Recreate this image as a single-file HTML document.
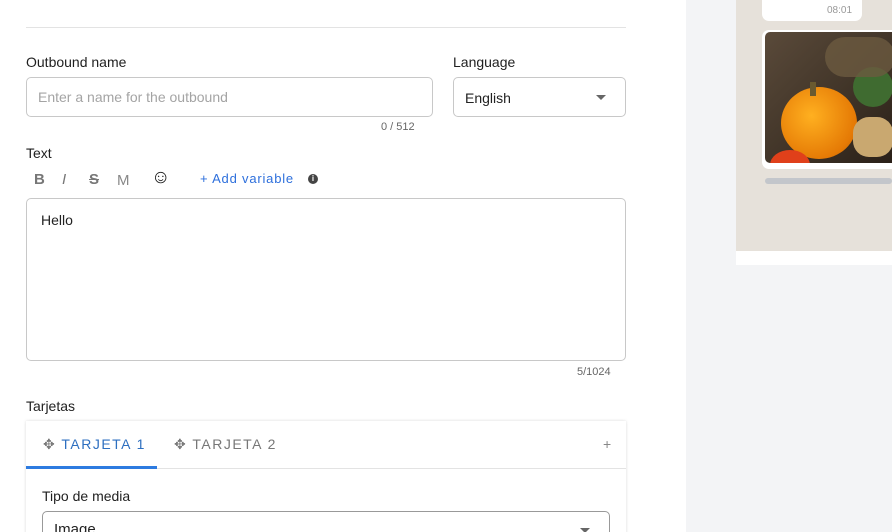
<!DOCTYPE html>
<html style="width:892px;height:532px;overflow:hidden"><head><style>
*{box-sizing:border-box;margin:0;padding:0}
body{width:892px;height:532px;overflow:hidden;background:#fff;font-family:"Liberation Sans",sans-serif;color:#222;position:relative}
#w{position:relative;width:892px;height:532px;overflow:hidden}
.a{position:absolute}
.lbl{font-size:14px;color:#1f1f1f}
.inp{border:1px solid #c8c8c8;border-radius:5px;background:#fff}
.small{font-size:11px;color:#666}
</style></head><body><div id="w">
<div class="a" style="left:26px;top:27px;width:600px;height:1px;background:#e3e3e3"></div>
<div class="a lbl" style="left:26px;top:54px">Outbound name</div>
<div class="a inp" style="left:26px;top:77px;width:407px;height:40px"></div>
<div class="a" style="left:38px;top:89px;font-size:14px;color:#a4a4a4">Enter a name for the outbound</div>
<div class="a small" style="left:381px;top:121px">0 / 512</div>
<div class="a lbl" style="left:453px;top:54px">Language</div>
<div class="a inp" style="left:453px;top:77px;width:173px;height:40px"></div>
<div class="a" style="left:465px;top:90px;font-size:14px">English</div>
<div class="a" style="left:596px;top:95px;width:0;height:0;border-left:5px solid transparent;border-right:5px solid transparent;border-top:5px solid #666"></div>
<div class="a lbl" style="left:26px;top:145px">Text</div>
<div class="a" style="left:34px;top:171px;font-size:15px;color:#777;font-weight:bold">B</div>
<div class="a" style="left:62px;top:171px;font-size:15px;color:#777;font-style:italic">I</div>
<div class="a" style="left:89px;top:171px;font-size:15px;color:#777;font-weight:bold;text-decoration:line-through">S</div>
<div class="a" style="left:117px;top:172px;font-size:15px;color:#888">M</div>
<div class="a" style="left:151px;top:167px;font-size:19px;color:#222">☺</div>
<div class="a" style="left:200px;top:171px;font-size:13px;color:#2d6fdc;letter-spacing:.8px">+ Add variable</div>
<div class="a" style="left:308px;top:174px;width:10px;height:10px;border-radius:50%;background:#444;color:#fff;font-size:8px;text-align:center;line-height:10px;font-weight:bold">i</div>
<div class="a inp" style="left:26px;top:198px;width:600px;height:163px"></div>
<div class="a" style="left:41px;top:212px;font-size:14px">Hello</div>
<div class="a small" style="left:577px;top:366px">5/1024</div>
<div class="a lbl" style="left:26px;top:398px">Tarjetas</div>
<div class="a" style="left:26px;top:421px;width:600px;height:120px;box-shadow:0 0 3px rgba(0,0,0,.15);background:#fff"></div>
<div class="a" style="left:26px;top:468px;width:600px;height:1px;background:#e3e3e3"></div>
<div class="a" style="left:26px;top:466px;width:131px;height:3px;background:#2d7be0"></div>
<div class="a" style="left:43px;top:436px;font-size:14px;color:#2d6fc0;letter-spacing:1.5px"><span style="color:#777">✥</span> TARJETA 1</div>
<div class="a" style="left:174px;top:436px;font-size:14px;color:#777;letter-spacing:1.5px">✥ TARJETA 2</div>
<div class="a" style="left:603px;top:436px;font-size:14px;color:#888">+</div>
<div class="a lbl" style="left:42px;top:488px">Tipo de media</div>
<div class="a inp" style="left:42px;top:511px;width:568px;height:40px;border-color:#999"></div>
<div class="a" style="left:54px;top:521px;font-size:15px">Image</div>
<div class="a" style="left:580px;top:528px;width:0;height:0;border-left:5px solid transparent;border-right:5px solid transparent;border-top:5px solid #666"></div>
<div class="a" style="left:686px;top:0;width:206px;height:532px;background:#f3f4f6"></div>
<div class="a" style="left:736px;top:0;width:156px;height:251px;background:#e6e1da"></div>
<div class="a" style="left:736px;top:251px;width:156px;height:14px;background:#fff"></div>
<div class="a" style="left:762px;top:0;width:100px;height:21px;background:#fff;border-radius:0 0 7px 7px"></div>
<div class="a" style="left:827px;top:5px;font-size:10px;color:#999">08:01</div>
<div class="a" style="left:762px;top:30px;width:140px;height:139px;background:#fff;border-radius:7px"></div>
<div class="a" style="left:765px;top:32px;width:127px;height:131px;border-radius:5px 0 0 5px;overflow:hidden;background:linear-gradient(135deg,#5a4a3a,#3e3226 60%,#2a2018)">
<div class="a" style="left:16px;top:55px;width:76px;height:72px;border-radius:50%;background:radial-gradient(circle at 40% 40%,#ffb020,#e57a05 70%,#b85a00)"></div>
<div class="a" style="left:45px;top:50px;width:6px;height:14px;background:#6a5a30"></div>
<div class="a" style="left:88px;top:35px;width:40px;height:40px;border-radius:50%;background:#3f6b30"></div>
<div class="a" style="left:60px;top:5px;width:70px;height:40px;border-radius:20px;background:#6b5a40;opacity:.8"></div>
<div class="a" style="left:5px;top:118px;width:40px;height:30px;border-radius:50%;background:#e0401a"></div>
<div class="a" style="left:88px;top:85px;width:40px;height:40px;border-radius:40%;background:#c9a870"></div>
</div>
<div class="a" style="left:765px;top:178px;width:127px;height:6px;border-radius:3px;background:#c3c6cb"></div>
</div></body></html>
